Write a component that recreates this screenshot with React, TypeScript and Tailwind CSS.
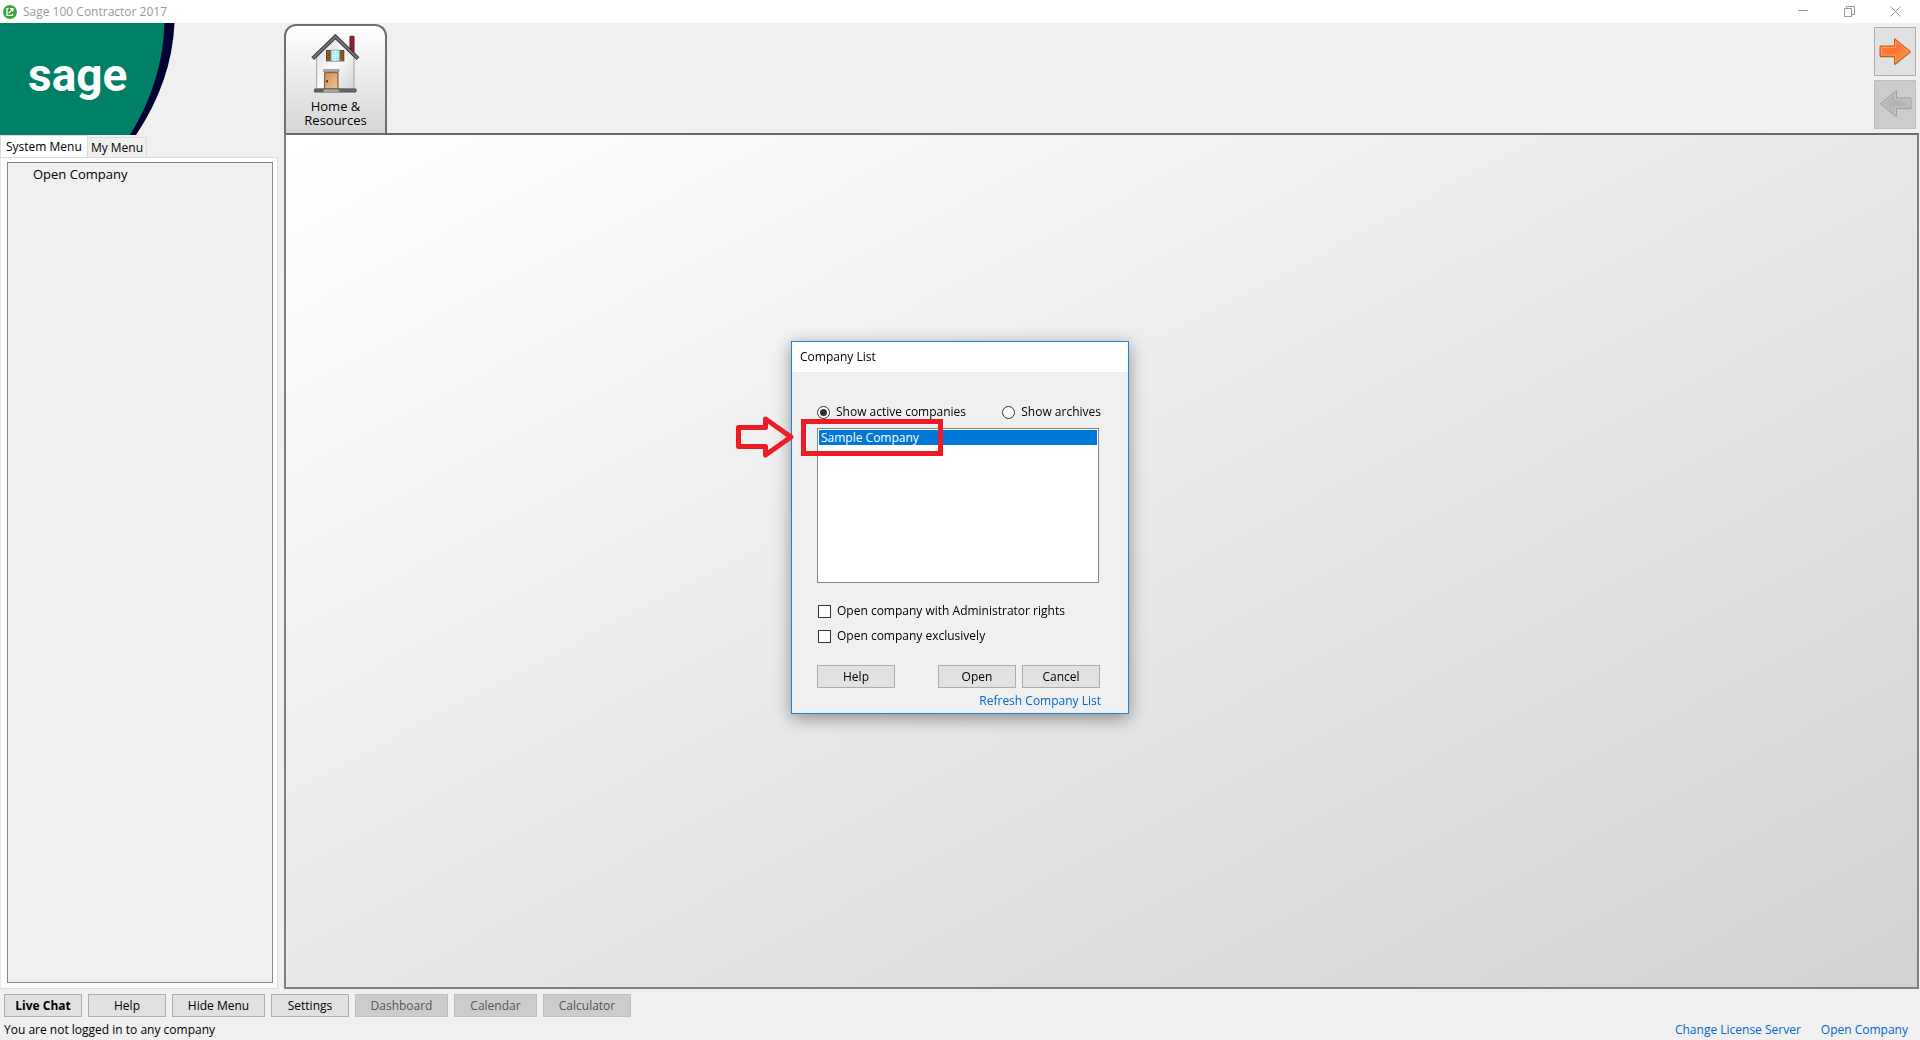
import { useState } from 'react';
import type { ReactNode } from 'react';
import clsx from 'clsx';

const toolbarButtons = [
  { label: 'Live Chat', width: 'w-[78px]', bold: true },
  { label: 'Help', width: 'w-[78px]' },
  { label: 'Hide Menu', width: 'w-[93px]' },
  { label: 'Settings', width: 'w-[78px]' },
  { label: 'Dashboard', width: 'w-[93px]', disabled: true },
  { label: 'Calendar', width: 'w-[83px]', disabled: true },
  { label: 'Calculator', width: 'w-[88px]', disabled: true },
];

const companies = ['Sample Company'];

interface PushButtonProps {
  children: ReactNode;
  className?: string;
  disabled?: boolean;
  onClick?: () => void;
}

function PushButton({ children, className, disabled, onClick }: PushButtonProps) {
  return (
    <button
      type="button"
      disabled={disabled}
      onClick={onClick}
      className={clsx(
        'flex h-[23px] items-center justify-center border',
        disabled ? 'border-[#bfbfbf] bg-[#cccccc] text-[#555555]' : 'border-[#adadad] bg-[#e1e1e1]',
        className,
      )}
    >
      {children}
    </button>
  );
}

function AppIcon() {
  return (
    <svg viewBox="0 0 14 14" className="size-[14px]" aria-hidden="true">
      <circle cx="7" cy="7" r="7" fill="#3aa537" />
      <path d="M5.6 3.6H4v6.8h5.6V8.8M5.8 8.2l3.8-4.4M7 3.7h2.9v2.9" fill="none" stroke="#fff" strokeWidth="1.3" />
    </svg>
  );
}

function TitleBar() {
  return (
    <header className="flex h-[23px] items-center bg-white pl-[3px] pr-[19px] text-[#999999]">
      <AppIcon />
      <h1 className="ml-[6px] flex-1">Sage 100 Contractor 2017</h1>
      <div className="flex gap-[35px]">
        <button type="button" aria-label="Minimize">
          <svg width="11" height="11" viewBox="0 0 11 11" stroke="#999">
            <path d="M0 4.500h10" />
          </svg>
        </button>
        <button type="button" aria-label="Restore">
          <svg width="11" height="11" viewBox="0 0 11 11" fill="none" stroke="#999">
            <path d="M.5 2.5h7v8h-7zM2.5 2.5v-2h8v8h-3" />
          </svg>
        </button>
        <button type="button" aria-label="Close">
          <svg width="11" height="11" viewBox="0 0 11 11" stroke="#999">
            <path d="M.5.5l10 10M10.5.5l-10 10" />
          </svg>
        </button>
      </div>
    </header>
  );
}

function Brand() {
  return (
    <div className="relative h-28">
      <svg viewBox="0 0 175 112" className="h-28 w-[175px]" aria-hidden="true">
        <path d="M0 0H174.500Q172 58 136 112H0z" fill="#000033" />
        <path d="M0 0H164.500Q163 58 130 112H0z" fill="#008066" />
      </svg>
      <span className="absolute left-7 top-6 font-['Roboto',sans-serif] text-[46px] font-bold leading-[56px] text-white">
        sage
      </span>
    </div>
  );
}

function HouseIcon() {
  return (
    <svg viewBox="0 0 147 177" className="h-[59px] w-[49px]" aria-hidden="true">
      <defs>
        <linearGradient id="wall" x1="0" y1="0" x2="1" y2="1">
          <stop offset="0" stopColor="#d8d8d8" />
          <stop offset="0.500" stopColor="#fbfbfb" />
          <stop offset="1" stopColor="#d4d4d6" />
        </linearGradient>
        <linearGradient id="door" x1="0" y1="0" x2="1" y2="1">
          <stop offset="0" stopColor="#c98f58" />
          <stop offset="1" stopColor="#efc79a" />
        </linearGradient>
      </defs>
      <path d="M117 7h12v53l-12-12z" fill="#9c2233" stroke="#5d1420" strokeWidth="3" />
      <path d="M118 15h10M118 24h10M118 33h10M118 42h10" stroke="#6e1824" strokeWidth="2" />
      <path d="M17 68L73 14l56 54v97H17z" fill="url(#wall)" stroke="#a5a5a8" strokeWidth="3" />
      <path d="M5 74L73 8l68 66" fill="none" stroke="#38343a" strokeWidth="12" />
      <path d="M6 73L73 8l67 65" fill="none" stroke="#77727a" strokeWidth="6" />
      <path d="M45 48h55v34H45z" fill="#5c371b" />
      <path d="M47 50h12v30H47zM87 50h11v30H87z" fill="#96602c" />
      <path d="M47 58h12M47 65h12M47 72h12M87 58h11M87 65h11M87 72h11" stroke="#5c371b" strokeWidth="2" />
      <path d="M60 48h26v34H60z" fill="#a8eef2" stroke="#8c9a9e" strokeWidth="2" />
      <path d="M61 65h24M73 49v32" stroke="#e9ffff" strokeWidth="2" />
      <path d="M38 107h46v6H38z" fill="#b6b6b8" stroke="#727276" strokeWidth="2" />
      <path d="M41 116h40v49H41z" fill="url(#door)" stroke="#7b4a22" strokeWidth="3" />
      <path d="M46 139h5v6h-5z" fill="#33261b" />
      <path d="M11 165h124v9H11z" fill="#6a6a6d" stroke="#4a4a4d" strokeWidth="3" />
      <path d="M40 166h42l4 8H36z" fill="#a8a49f" />
    </svg>
  );
}

function ArrowIcon({ muted }: { muted?: boolean }) {
  const id = muted ? 'arrow-muted' : 'arrow-active';
  return (
    <svg viewBox="0 0 33 29" className={clsx('h-[29px] w-[33px]', muted && '-scale-x-100')} aria-hidden="true">
      <defs>
        <linearGradient id={id} x1="0" y1="0" x2="1" y2="1">
          <stop offset="0" stopColor={muted ? '#d0d0d0' : '#ff8a4a'} />
          <stop offset="0.450" stopColor={muted ? '#b0b0b0' : '#f9702c'} />
          <stop offset="1" stopColor={muted ? '#c4c4c4' : '#ffa066'} />
        </linearGradient>
      </defs>
      <path d="M1.500 9.500H16V2L32 15.500 16 28.500V20.500H1.500z" fill={muted ? '#b0b0b0' : '#777'} opacity="0.600" />
      <path
        d="M1 9H15.500V1.500L31.500 14.500 15.500 27.500V19.500H1z"
        fill={`url(#${id})`}
        stroke={muted ? '#a0a0a0' : '#c4620c'}
      />
      <path
        d="M2.500 10.500H16.500V4L29.500 14.500 16.500 25V18H2.500z"
        fill="none"
        stroke={muted ? '#c4c4c4' : '#ff9a5c'}
      />
    </svg>
  );
}

function Sidebar() {
  return (
    <aside className="flex w-[284px] shrink-0 flex-col pr-[6px]">
      <Brand />
      <div role="tablist" className="flex items-end">
        <button
          type="button"
          role="tab"
          aria-selected="true"
          className="h-[22px] w-[88px] border-x border-t border-[#dcdcdc] bg-white pl-[5px] text-left leading-5"
        >
          System Menu
        </button>
        <button
          type="button"
          role="tab"
          aria-selected="false"
          className="h-5 w-[59px] border-r border-t border-[#dcdcdc] leading-5"
        >
          My Menu
        </button>
      </div>
      <div className="flex flex-1 flex-col border border-[#dcdcdc] border-l-[#e8e8e8] bg-white pb-[5px] pl-[6px] pr-1 pt-1">
        <ul className="flex-1 border border-[#828790] bg-[#f0f0f0] py-[2px] pl-[25px] text-[13px]">
          <li>
            <a href="#open-company" className="leading-[18px]">
              Open Company
            </a>
          </li>
        </ul>
      </div>
    </aside>
  );
}

function Workspace() {
  return (
    <main className="flex min-w-0 flex-1 flex-col pr-px">
      <div className="flex h-[110px] items-start justify-between">
        <button
          type="button"
          className="mt-px flex h-[109px] w-[103px] flex-col items-center rounded-t-xl border-2 border-b-0 border-[#707070] bg-linear-to-b from-white to-[#d6d6d6] pt-2 text-[13px] leading-[14px]"
        >
          <HouseIcon />
          <span className="mt-[6px] w-20">Home &amp; Resources</span>
        </button>
        <div className="mr-[3px] mt-1 flex flex-col gap-1">
          <button
            type="button"
            aria-label="Forward"
            className="flex h-[49px] w-[42px] items-center justify-center border border-[#adadad] bg-[#e1e1e1]"
          >
            <ArrowIcon />
          </button>
          <button
            type="button"
            aria-label="Back"
            disabled
            className="flex h-[49px] w-[42px] items-center justify-center border border-[#bfbfbf] bg-[#cccccc] pb-[2px]"
          >
            <ArrowIcon muted />
          </button>
        </div>
      </div>
      <div className="flex-1 border-2 border-[#808080] border-t-[#6a6a6a] bg-linear-to-br from-white to-[#d2d2d2]" />
    </main>
  );
}

function Callout() {
  return (
    <>
      <div className="pointer-events-none absolute -left-4 -top-[9px] h-[37px] w-[142px] border-[5px] border-[#ed1c24]" />
      <svg
        viewBox="0 0 58 42"
        className="pointer-events-none absolute -left-[81px] -top-3 h-[42px] w-[58px]"
        aria-hidden="true"
      >
        <path
          d="M2.500 11.500H29.500V3L55 21 29.500 39V30.500H2.500z"
          fill="none"
          stroke="#ed1c24"
          strokeWidth="5"
          strokeLinejoin="round"
        />
      </svg>
    </>
  );
}

const radioClass =
  'grid size-[13px] appearance-none place-content-center rounded-full border border-[#333333] bg-white before:size-[7px] before:rounded-full checked:before:bg-[#333333]';
const checkboxClass = 'size-[13px] appearance-none border border-[#333333] bg-white checked:bg-[#333333]';

function CompanyListDialog() {
  const [view, setView] = useState('active');
  const [selected, setSelected] = useState(companies[0]);

  return (
    <div className="fixed inset-0 flex items-center justify-center pt-[15px]">
      <section
        role="dialog"
        aria-labelledby="company-list-title"
        className="w-[338px] border border-[#1883d7] bg-[#f0f0f0] shadow-[0_4px_16px_rgba(0,0,0,0.4)]"
      >
        <h2 id="company-list-title" className="h-[30px] bg-white px-2 leading-[30px]">
          Company List
        </h2>
        <div className="pb-1 pl-[25px] pr-[27px] pt-8">
          <div className="flex h-4 items-center justify-between">
            <label className="flex items-center gap-[6px]">
              <input
                type="radio"
                name="view"
                className={radioClass}
                checked={view === 'active'}
                onChange={() => setView('active')}
              />
              Show active companies
            </label>
            <label className="flex items-center gap-[6px]">
              <input
                type="radio"
                name="view"
                className={radioClass}
                checked={view === 'archives'}
                onChange={() => setView('archives')}
              />
              Show archives
            </label>
          </div>

          <div className="relative mr-[2px] mt-2">
            <ul role="listbox" aria-label="Companies" className="h-[155px] border border-[#828790] bg-white p-px">
              {companies.map((name) => (
                <li
                  key={name}
                  role="option"
                  aria-selected={name === selected}
                  onClick={() => setSelected(name)}
                  className="h-[15px] px-[2px] leading-[15px] aria-selected:bg-[#0078d7] aria-selected:text-white"
                >
                  {name}
                </li>
              ))}
            </ul>
            <Callout />
          </div>

          <div className="mt-5 flex flex-col gap-[9px] pl-px">
            <label className="flex h-4 items-center gap-[6px]">
              <input type="checkbox" className={checkboxClass} />
              Open company with Administrator rights
            </label>
            <label className="flex h-4 items-center gap-[6px]">
              <input type="checkbox" className={checkboxClass} />
              Open company exclusively
            </label>
          </div>

          <div className="mr-px mt-[21px] flex gap-[6px]">
            <PushButton className="mr-auto w-[78px]">Help</PushButton>
            <PushButton className="w-[78px]">Open</PushButton>
            <PushButton className="w-[78px]">Cancel</PushButton>
          </div>
          <div className="mt-[5px] text-right leading-4">
            <a href="#refresh" className="text-[#0066cc]">
              Refresh Company List
            </a>
          </div>
        </div>
      </section>
    </div>
  );
}

function Footer() {
  return (
    <footer className="px-1 pb-[2px] pt-[5px]">
      <div className="flex gap-[6px]">
        {toolbarButtons.map((button) => (
          <PushButton
            key={button.label}
            disabled={button.disabled}
            className={clsx(button.width, button.bold && 'font-bold')}
          >
            {button.label}
          </PushButton>
        ))}
      </div>
      <div className="mt-[5px] flex items-center pr-2 leading-4">
        <p className="flex-1">You are not logged in to any company</p>
        <nav className="flex gap-5 text-[#0066cc]">
          <a href="#license-server">Change License Server</a>
          <a href="#open-company">Open Company</a>
        </nav>
      </div>
    </footer>
  );
}

export default function App() {
  return (
    <div className="flex min-h-screen flex-col bg-[#f0f0f0] font-['Open_Sans','Noto_Sans',sans-serif] text-xs text-black">
      <TitleBar />
      <div className="flex flex-1">
        <Sidebar />
        <Workspace />
      </div>
      <Footer />
      <CompanyListDialog />
    </div>
  );
}
